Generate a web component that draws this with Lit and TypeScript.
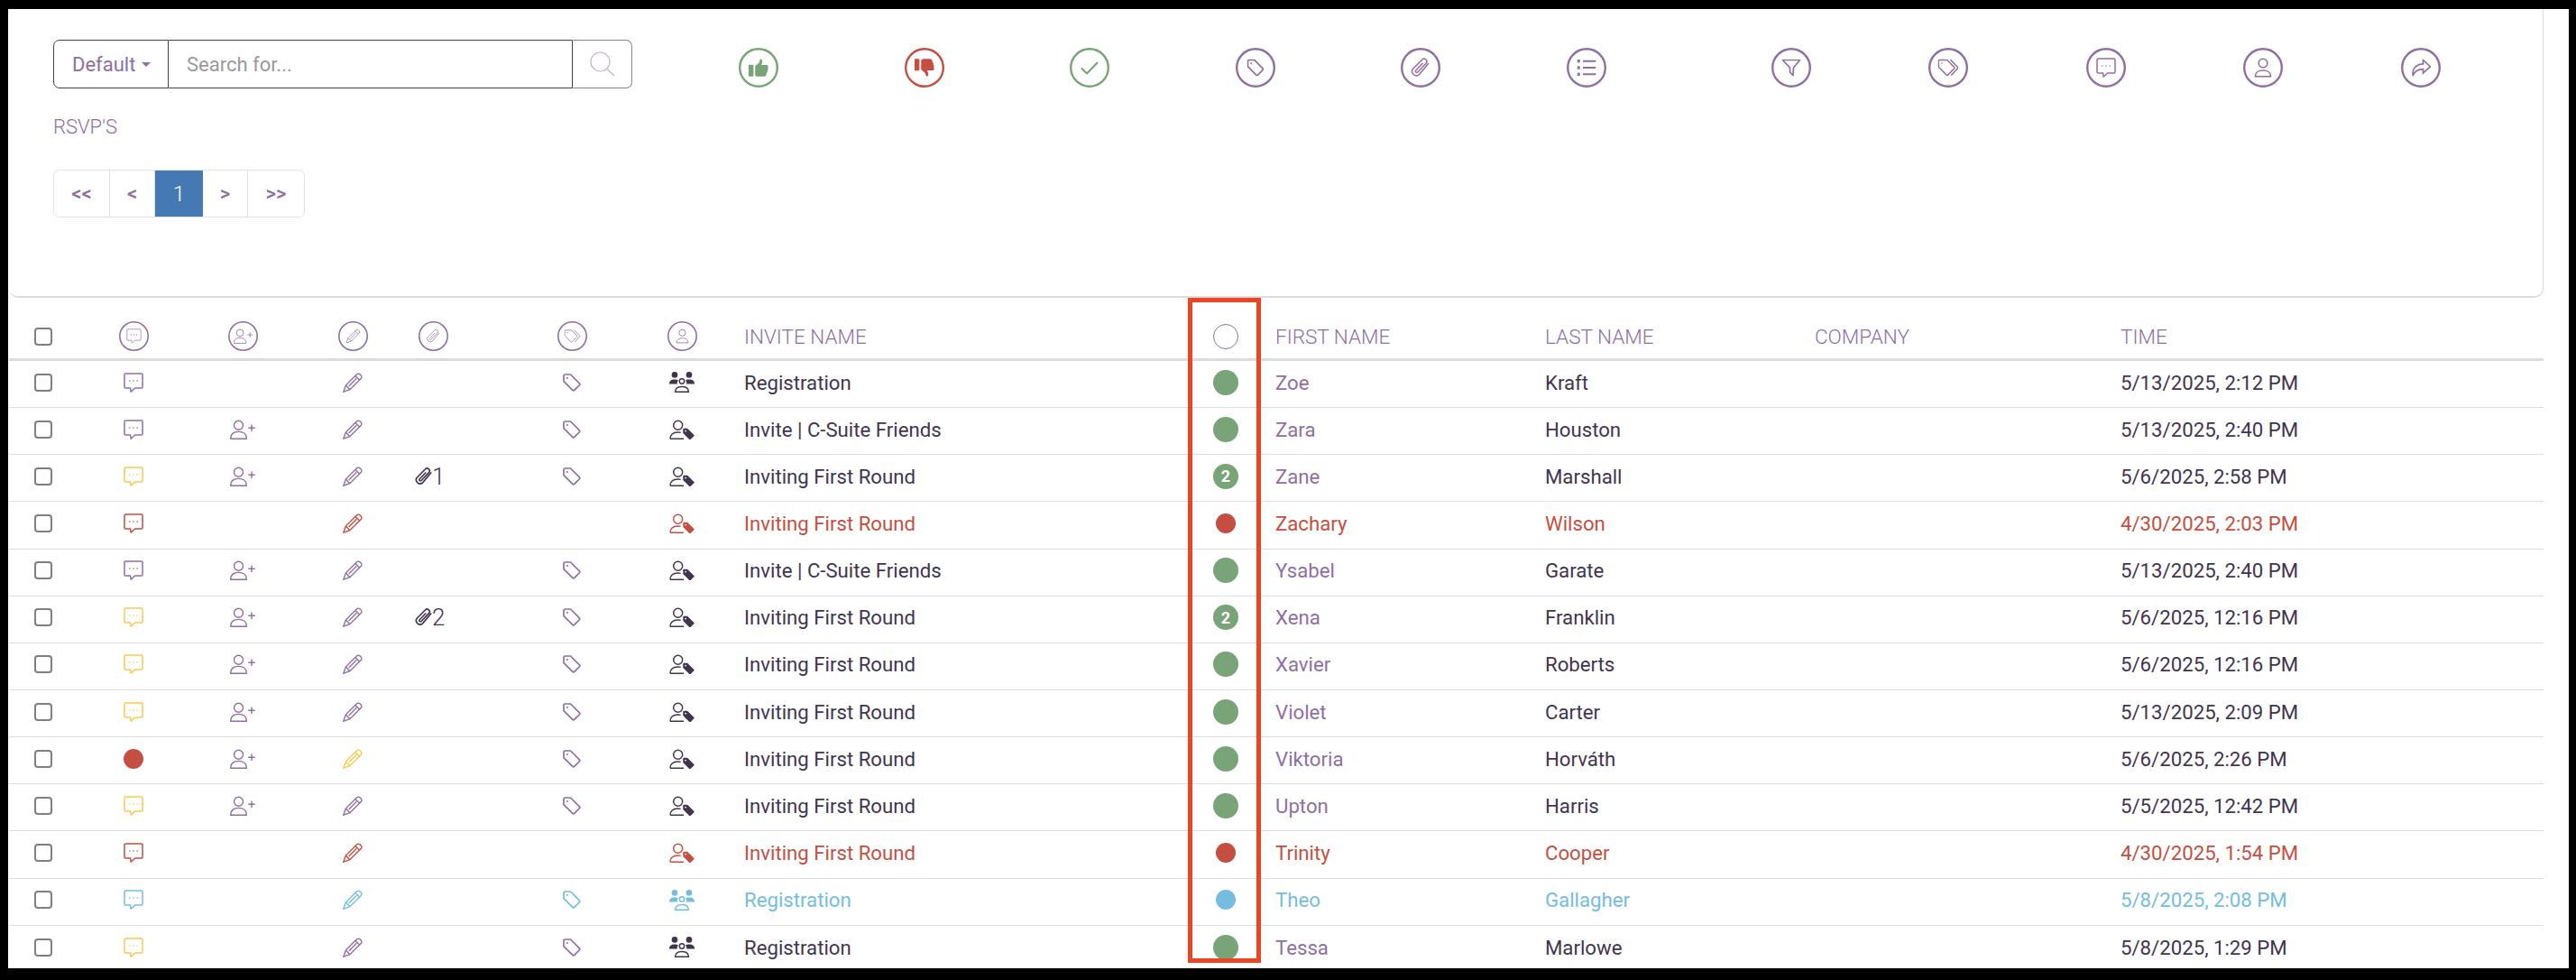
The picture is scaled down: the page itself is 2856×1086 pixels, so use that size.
import { LitElement, html, svg, css, nothing, type TemplateResult } from 'lit';
import { customElement } from 'lit/decorators.js';

type Tone = 'purple' | 'yellow' | 'red' | 'blue' | 'green' | 'dark';

interface Glyph {
  w: number;
  h: number;
  body: TemplateResult;
}

const thumb = svg`<rect x="0" y="7" width="6" height="14" rx=".8" fill="currentColor" stroke="none"/><path fill="currentColor" stroke="none" d="M8 8.5l4.500-4C13.500 3 13.500 1.200 14.500.2c1.800.2 2.300 2.300 1.800 4l-1 3h6.200c2 0 2.600 2.400 1.300 3.400.9 1 .7 2.600-.4 3.200.5 1.100.1 2.600-1 3.100.2 1.500-.7 4.100-2.400 4.100H11c-1.600 0-3-.8-3-2.200z"/>`;

const glyphs: Record<string, Glyph> = {
  chat: {
    w: 22, h: 22,
    body: svg`<path d="M2.200 1h17.600A1.200 1.200 0 0 1 21 2.200v13.600a1.200 1.200 0 0 1-1.200 1.200h-7l-4.600 4-.7-4H2.200A1.200 1.200 0 0 1 1 15.800V2.200A1.200 1.200 0 0 1 2.200 1z"/><circle cx="6.800" cy="9" r=".8" fill="currentColor" stroke="none"/><circle cx="11" cy="9" r=".8" fill="currentColor" stroke="none"/><circle cx="15.200" cy="9" r=".8" fill="currentColor" stroke="none"/>`,
  },
  add: {
    w: 28, h: 22,
    body: svg`<circle cx="9.500" cy="6.300" r="5"/><path d="M.8 21.200v-1c0-4.400 3.600-6.800 8.600-6.800s8.800 2.400 8.800 6.800v1z"/><path d="M20.300 9.200h7.400M24 5.500v7.400"/>`,
  },
  pencil: {
    w: 22, h: 22,
    body: svg`<path d="M.9 21.100l2.400-7L15.600 1.800a2.400 2.400 0 0 1 3.400 0l1.200 1.200a2.400 2.400 0 0 1 0 3.400L7.900 18.700z"/><path d="M3.300 14.100l4.600 4.600M14 3.400l4.600 4.600M6.700 14.900l8.600-8.600"/>`,
  },
  tag: {
    w: 20, h: 20,
    body: svg`<path d="M1 2.600A1.600 1.600 0 0 1 2.600 1h6l9.600 9.600a1.700 1.700 0 0 1 0 2.400l-5.200 5.200a1.700 1.700 0 0 1-2.400 0L1 8.600z"/><circle cx="5" cy="5" r="1" fill="currentColor" stroke="none"/>`,
  },
  tags: {
    w: 23, h: 20,
    body: svg`<path d="M.8 2.600a1 1 0 0 1 1-1h8.400a1 1 0 0 1 .7.3l7.200 7.600a1 1 0 0 1 0 1.400l-7 7.300a1 1 0 0 1-1.400 0L1.100 9.400a1 1 0 0 1-.3-.7z"/><path d="M14 1.200l8 8.200a1 1 0 0 1 0 1.400l-7.200 7.800"/><circle cx="4.500" cy="5" r=".8" fill="currentColor" stroke="none"/>`,
  },
  clip: {
    w: 22, h: 22,
    body: svg`<path d="M20 6L9.500 18.500a4.700 4.700 0 0 1-7-6.200L12.600 2.200a3 3 0 0 1 4.500 4L7.800 16a1.400 1.400 0 0 1-2-2L13.500 6"/>`,
  },
  person: {
    w: 20, h: 22,
    body: svg`<circle cx="10" cy="6" r="4.800"/><path d="M1.500 20.800v-.8c0-3.800 3.600-6 8.500-6s8.500 2.200 8.500 6v.8z"/>`,
  },
  personTag: {
    w: 28, h: 22,
    body: svg`<circle cx="9.700" cy="6.300" r="5"/><path d="M1 21.300c0-4.500 3-7.300 8.500-7.300 1.200 0 2.300.1 3.200.4M1 21.300h15"/><path fill="currentColor" stroke="none" d="M15.300 10.800a1 1 0 0 1 1-1h3.400a1 1 0 0 1 .7.3l7 6.800a1 1 0 0 1 0 1.400l-3.800 3.600a1 1 0 0 1-1.400 0l-6.600-6.600a1 1 0 0 1-.3-.7z"/><circle cx="18.200" cy="12.600" r=".9" fill="#fff" stroke="none"/>`,
  },
  group: {
    w: 28, h: 23,
    body: svg`<g fill="currentColor" stroke="none"><circle cx="6" cy="3.400" r="3.300"/><circle cx="22" cy="3.400" r="3.300"/><path d="M0 13.400c0-3.200 2-5 6-5 1.600 0 3 .3 4 1-1 1-1.400 2.400-1.200 4z"/><path d="M28 13.400c0-3.200-2-5-6-5-1.600 0-3 .3-4 1 1 1 1.400 2.400 1.200 4z"/></g><circle cx="14" cy="10.500" r="2.700"/><path d="M6.600 22.300c0-3.800 3-5.800 7.400-5.800s7.400 2 7.400 5.800z"/>`,
  },
  check: {
    w: 20, h: 15,
    body: svg`<path d="M1 8l6 6L19 1.500"/>`,
  },
  list: {
    w: 21, h: 18,
    body: svg`<g fill="currentColor" stroke="none"><rect x="0" y="0" width="3.200" height="3.400"/><rect x="0" y="7.300" width="3.200" height="3.400"/><rect x="0" y="14.600" width="3.200" height="3.400"/></g><path d="M6.500 1.700H21M6.500 9H21M6.500 16.300H21"/>`,
  },
  funnel: {
    w: 21, h: 19,
    body: svg`<path d="M1 1h19l-7 8.500-.6 8.500-3.400-3.500V9.500z"/>`,
  },
  share: {
    w: 23, h: 19,
    body: svg`<path d="M14 1l8 7.500-8 7v-4.300c-5.500 0-9 1.800-11.200 6.800C1.500 11.500 5.500 5.600 14 5.300z"/>`,
  },
  search: {
    w: 28, h: 28,
    body: svg`<circle cx="11.500" cy="11.500" r="10.500"/><path d="M19 19.500l8 7.500"/>`,
  },
  up: { w: 24, h: 21, body: thumb },
  down: { w: 24, h: 21, body: svg`<g transform="matrix(1 0 0 -1 0 21)">${thumb}</g>` },
};

function icon(name: string, w: number, h: number, stroke = 1.5) {
  const g = glyphs[name];
  return html`<svg class="icon" width=${w} height=${h} viewBox="0 0 ${g.w} ${g.h}"
    fill="none" stroke="currentColor" stroke-width=${stroke}>${g.body}</svg>`;
}

// circled icon, used in the toolbar and in the table header
function ring(name: string, size: number, w: number, h: number, ringStroke: number, stroke: number) {
  const g = glyphs[name];
  const r = (size - ringStroke) / 2;
  return html`<svg class="icon" width=${size} height=${size} viewBox="0 0 ${size} ${size}" fill="none" stroke="currentColor">
    <circle cx=${size / 2} cy=${size / 2} r=${r} stroke-width=${ringStroke}/>
    <svg x=${(size - w) / 2} y=${(size - h) / 2} width=${w} height=${h} viewBox="0 0 ${g.w} ${g.h}" stroke-width=${stroke}>${g.body}</svg>
  </svg>`;
}

interface Row {
  chat: Tone | 'dot';
  add?: boolean;
  pencil?: Tone;
  clip?: number;
  tag?: Tone | null;
  who: 'group' | 'personTag';
  invite: string;
  status?: Tone;
  badge?: number;
  first: string;
  last: string;
  time: string;
  tone?: Tone;
}

const FIRST = 'Inviting First Round';
const CSUITE = 'Invite | C-Suite Friends';

const rows: Row[] = [
  { chat: 'purple', who: 'group', invite: 'Registration', first: 'Zoe', last: 'Kraft', time: '5/13/2025, 2:12 PM' },
  { chat: 'purple', add: true, who: 'personTag', invite: CSUITE, first: 'Zara', last: 'Houston', time: '5/13/2025, 2:40 PM' },
  { chat: 'yellow', add: true, clip: 1, who: 'personTag', invite: FIRST, badge: 2, first: 'Zane', last: 'Marshall', time: '5/6/2025, 2:58 PM' },
  { chat: 'red', tag: null, who: 'personTag', invite: FIRST, first: 'Zachary', last: 'Wilson', time: '4/30/2025, 2:03 PM', tone: 'red' },
  { chat: 'purple', add: true, who: 'personTag', invite: CSUITE, first: 'Ysabel', last: 'Garate', time: '5/13/2025, 2:40 PM' },
  { chat: 'yellow', add: true, clip: 2, who: 'personTag', invite: FIRST, badge: 2, first: 'Xena', last: 'Franklin', time: '5/6/2025, 12:16 PM' },
  { chat: 'yellow', add: true, who: 'personTag', invite: FIRST, first: 'Xavier', last: 'Roberts', time: '5/6/2025, 12:16 PM' },
  { chat: 'yellow', add: true, who: 'personTag', invite: FIRST, first: 'Violet', last: 'Carter', time: '5/13/2025, 2:09 PM' },
  { chat: 'dot', add: true, pencil: 'yellow', who: 'personTag', invite: FIRST, first: 'Viktoria', last: 'Horváth', time: '5/6/2025, 2:26 PM' },
  { chat: 'yellow', add: true, who: 'personTag', invite: FIRST, first: 'Upton', last: 'Harris', time: '5/5/2025, 12:42 PM' },
  { chat: 'red', tag: null, who: 'personTag', invite: FIRST, first: 'Trinity', last: 'Cooper', time: '4/30/2025, 1:54 PM', tone: 'red' },
  { chat: 'blue', who: 'group', invite: 'Registration', first: 'Theo', last: 'Gallagher', time: '5/8/2025, 2:08 PM', tone: 'blue' },
  { chat: 'yellow', who: 'group', invite: 'Registration', first: 'Tessa', last: 'Marlowe', time: '5/8/2025, 1:29 PM' },
];

@customElement('app-root')
export class AppRoot extends LitElement {
  private _renderToolbar() {
    return html`
      <div class="tools">
        <div class="tool-group first">
          <span class="green">${ring('up', 44, 22.5, 20, 2.4, 1)}</span>
          <span class="red">${ring('down', 44, 22.5, 20, 2.4, 1)}</span>
          <span class="green">${ring('check', 44, 20, 15, 2.4, 2.2)}</span>
          <span class="purple">${ring('tag', 44, 19, 19, 2.4, 1.8)}</span>
          <span class="purple">${ring('clip', 44, 22, 22, 2.4, 1.5)}</span>
          <span class="purple">${ring('list', 44, 21, 18, 2.4, 2)}</span>
        </div>
        <div class="tool-group second">
          <span class="purple">${ring('funnel', 44, 21, 19, 2.4, 1.7)}</span>
          <span class="purple">${ring('tags', 44, 23, 20, 2.4, 1.5)}</span>
          <span class="purple">${ring('chat', 44, 22, 22, 2.4, 1.5)}</span>
          <span class="purple">${ring('person', 44, 20, 22, 2.4, 1.6)}</span>
          <span class="purple">${ring('share', 44, 23, 19, 2.4, 1.7)}</span>
        </div>
      </div>
    `;
  }

  private _renderPanel() {
    return html`
      <section class="panel">
        <div class="top">
          <div class="search">
            <button class="dropdown">Default<i class="caret"></i></button>
            <input class="query" placeholder="Search for..." />
            <button class="go">${icon('search', 28, 28, 1.2)}</button>
          </div>
          ${this._renderToolbar()}
        </div>
        <div class="title">RSVP'S</div>
        <nav class="pager">
          <a style="width:62px">&lt;&lt;</a>
          <a style="width:50px">&lt;</a>
          <a class="active" style="width:53px">1</a>
          <a style="width:50px">&gt;</a>
          <a style="width:62px">&gt;&gt;</a>
        </nav>
      </section>
    `;
  }

  private _renderHead() {
    return html`
      <div class="row head">
        <div class="c"><input type="checkbox" /></div>
        <div class="c">${ring('chat', 33, 17, 17, 1.6, 0.9)}</div>
        <div class="c">${ring('add', 33, 22, 17, 1.6, 1.1)}</div>
        <div class="c">${ring('pencil', 33, 16, 16, 1.6, 1)}</div>
        <div class="clipcol hc">${ring('clip', 33, 16, 16, 1.6, 1)}</div>
        <div class="c">${ring('tags', 33, 18, 16, 1.6, 1)}</div>
        <div class="c">${ring('person', 33, 15, 17, 1.6, 1.1)}</div>
        <div class="t invite">Invite Name</div>
        <div class="c"><i class="hollow"></i></div>
        <div class="t">First Name</div>
        <div class="t">Last Name</div>
        <div class="t">Company</div>
        <div class="t">Time</div>
      </div>
    `;
  }

  private _renderRow(r: Row) {
    const base = r.tone ?? '';
    const chat = r.chat === 'dot'
      ? html`<i class="dot red-bg small"></i>`
      : html`<span class=${r.chat}>${icon('chat', 22, 22, 1.5)}</span>`;
    const tag = r.tag === null ? nothing : html`<span class=${r.tone ?? 'purple'}>${icon('tag', 20, 20, 1.7)}</span>`;
    const status = r.tone
      ? html`<i class="dot small ${r.tone}-bg"></i>`
      : html`<i class="dot green-bg">${r.badge ?? nothing}</i>`;
    return html`
      <div class="row ${base}">
        <div class="c"><input type="checkbox" /></div>
        <div class="c">${chat}</div>
        <div class="c">${r.add ? html`<span class="purple">${icon('add', 28, 22, 1.4)}</span>` : nothing}</div>
        <div class="c"><span class=${r.tone ?? r.pencil ?? 'purple'}>${icon('pencil', 22, 22, 1.4)}</span></div>
        <div class="clipcol">${r.clip
          ? html`<span class="att">${icon('clip', 20, 22, 1.8)}<b>${r.clip}</b></span>`
          : nothing}</div>
        <div class="c">${tag}</div>
        <div class="c">${icon(r.who, 28, r.who === 'group' ? 23 : 22, 1.5)}</div>
        <div class="t invite">${r.invite}</div>
        <div class="c">${status}</div>
        <div class="t ${r.tone ?? 'purple'}">${r.first}</div>
        <div class="t">${r.last}</div>
        <div class="t"></div>
        <div class="t">${r.time}</div>
      </div>
    `;
  }

  override render() {
    return html`
      <div class="page">
        ${this._renderPanel()}
        <div class="table">
          ${this._renderHead()}
          ${rows.map(r => this._renderRow(r))}
        </div>
        <div class="callout"></div>
      </div>
    `;
  }

  static override styles = css`
    :host {
      display: block;
      box-sizing: border-box;
      width: 2856px;
      height: 1086px;
      padding: 10px 8px 13px 9px;
      background: #000;
      font-family: Roboto, "Liberation Sans", sans-serif;
      font-size: 22.2px;
      color: #42344f;
    }

    .page {
      position: relative;
      height: 100%;
      background: #fff;
      overflow: hidden;
    }

    .icon { display: block; }

    .purple { color: #8f6fa3; }
    .yellow { color: #fcc94f; }
    .red { color: #c44f41; }
    .blue { color: #74bde0; }
    .green { color: #79a478; }

    /* Top panel */
    .panel {
      box-sizing: border-box;
      width: 2810px;
      height: 320px;
      margin-left: 1px;
      padding: 34px 0 0 49px;
      border-right: 1px solid #ddd;
      border-bottom: 2px solid #ddd;
      border-radius: 0 0 10px 10px;
    }

    .top {
      display: flex;
      align-items: flex-start;
    }

    .search {
      display: flex;
      width: 642px;
      height: 54px;
      flex: none;
    }

    .dropdown {
      box-sizing: border-box;
      width: 128px;
      padding: 0 0 0 20px;
      display: flex;
      align-items: center;
      background: #fff;
      border: 1.5px solid #4a3c5a;
      border-radius: 7px 0 0 7px;
      color: #8f6fa3;
      font: 400 22px Roboto, sans-serif;
      text-align: left;
    }

    .caret {
      margin-left: 6.5px;
      border: 5.5px solid transparent;
      border-top-color: #8f6fa3;
      border-bottom: 0;
    }

    .query {
      box-sizing: border-box;
      width: 447px;
      padding: 0 0 0 20px;
      border: 1.5px solid #4a3c5a;
      border-left: 0;
      border-right: 0;
      outline: none;
      font: 400 22px Roboto, sans-serif;
      color: #42344f;
    }

    .query::placeholder { color: #999; opacity: 1; }

    .go {
      box-sizing: border-box;
      flex: 1;
      padding: 0;
      display: flex;
      align-items: center;
      justify-content: center;
      background: #fff;
      border: 1.5px solid #8c8197;
      border-left-color: #4a3c5a;
      border-radius: 0 7px 7px 0;
      color: #c5b2d0;
    }

    .tools {
      display: flex;
      margin: 9px 0 0 118px;
      gap: 183px;
    }

    .tool-group { display: flex; }
    .tool-group.first { gap: 139.6px; }
    .tool-group.second { gap: 130.4px; }

    .title {
      margin-top: 29px;
      color: #8f6fa3;
      font-weight: 300;
      font-size: 22px;
      line-height: 28px;
    }

    .pager {
      display: flex;
      width: max-content;
      height: 53px;
      margin-top: 33px;
      box-sizing: border-box;
      border: 1.5px solid #e2e2e2;
      border-radius: 7px;
      overflow: hidden;
    }

    .pager a {
      box-sizing: border-box;
      display: flex;
      align-items: center;
      justify-content: center;
      border-right: 1px solid #e2e2e2;
      color: #8f6fa3;
      font-weight: 500;
      font-size: 22px;
    }

    .pager a:last-child { border-right: 0; }

    .pager a.active {
      background: #4579b4;
      color: #fff;
      font-weight: 300;
      font-size: 24px;
      border: 0;
      margin: -2px 0;
    }

    /* Table */
    .table {
      width: 2810px;
      margin-left: 1px;
    }

    .row {
      display: grid;
      grid-template-columns: 76px 124px 118px 126px 124px 112px 132px 495px 84px 299px 299px 339px 1fr;
      align-items: center;
      box-sizing: border-box;
      height: 52.15px;
      padding-bottom: 4px;
      border-bottom: 1.5px solid #ddd;
    }

    .row:last-child { border-bottom: 0; }

    .row.head {
      height: 70px;
      padding: 18px 0 0;
      border-bottom: 3px solid #dcdcdc;
      color: #8f6fa3;
    }

    .head .t {
      font-weight: 300;
      font-size: 22.5px;
      text-transform: uppercase;
    }

    .c {
      display: flex;
      justify-content: center;
      align-items: center;
    }

    .t { padding-left: 13px; white-space: nowrap; }
    .t.invite { padding-left: 3px; }

    .clipcol { padding-left: 6px; }
    .clipcol.hc { padding-left: 10px; }

    .att {
      display: flex;
      align-items: center;
    }

    .att b {
      margin-left: -1px;
      font-weight: 300;
      font-size: 26px;
      line-height: 24px;
    }

    input[type='checkbox'] {
      appearance: none;
      box-sizing: border-box;
      width: 20px;
      height: 20px;
      margin: 0;
      background: #fff;
      border: 2px solid #7f7f7f;
      border-radius: 4px;
    }

    .hollow {
      box-sizing: border-box;
      width: 28px;
      height: 28px;
      border: 1.5px solid #8f6fa3;
      border-radius: 50%;
    }

    .dot {
      display: flex;
      align-items: center;
      justify-content: center;
      width: 28px;
      height: 28px;
      border-radius: 50%;
      color: #fff;
      font-style: normal;
      font-weight: 700;
      font-size: 18px;
    }

    .dot.small { width: 22px; height: 22px; }

    .green-bg { background: #79a478; }
    .red-bg { background: #c44f41; }
    .blue-bg { background: #74bde0; }

    /* Annotation frame lying over the status column */
    .callout {
      position: absolute;
      left: 1308px;
      top: 320px;
      box-sizing: border-box;
      width: 81px;
      height: 737px;
      border: 5px solid #ec4526;
    }
  `;
}
